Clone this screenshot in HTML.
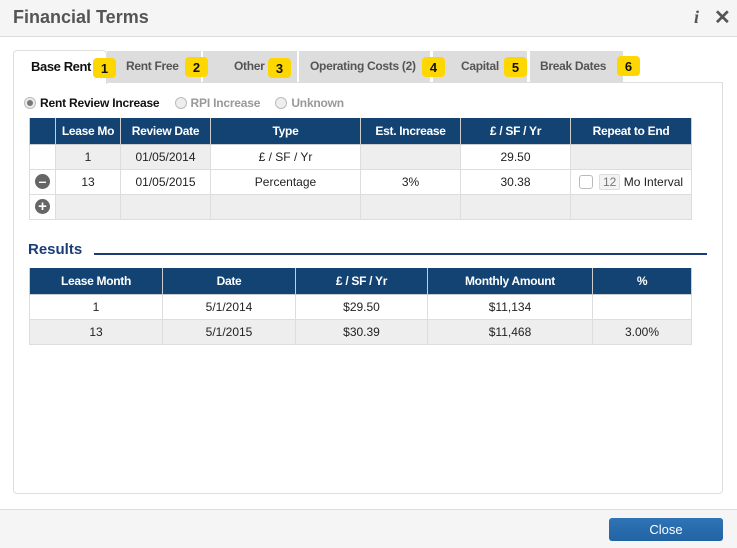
<!DOCTYPE html>
<html><head><style>
*{box-sizing:border-box;margin:0;padding:0}
body{width:737px;height:548px;position:relative;font-family:"Liberation Sans",Arial,sans-serif;font-size:12px;color:#222;background:#fff;overflow:hidden}
.a{position:absolute}
.hdr{left:0;top:0;width:737px;height:37px;background:#f5f5f5;border-bottom:1px solid #ddd}
.ftr{left:0;top:509px;width:737px;height:39px;background:#f5f5f5;border-top:1px solid #ddd}
.tab{top:51px;height:31px;background:#ddd;color:#555;font-size:12px;font-weight:bold;line-height:31px;letter-spacing:-0.3px;white-space:nowrap}
.badge{background:#ffd700;border-radius:4px;width:23px;height:20px;font-weight:bold;font-size:13px;line-height:21px;text-align:center;color:#111}
table{border-collapse:collapse;position:absolute;table-layout:fixed}
th{background:#134372;color:#fff;font-weight:bold;font-size:12px;height:26px;border:1px solid #ccc;border-top:none;letter-spacing:-0.3px}
td{border:1px solid #ddd;height:25px;text-align:center;font-size:12px}
tr.g td{background:#eee}
.rad{display:inline-block;width:12px;height:12px;border-radius:50%;border:1px solid #bbb;background:#eee;vertical-align:-2px;margin-right:4px}
</style></head><body>
<div class="a hdr"></div>
<div class="a" style="left:13px;top:7px;font-size:18px;font-weight:bold;color:#555">Financial Terms</div>
<div class="a" style="left:694px;top:7px;font-size:18px;font-weight:bold;font-style:italic;font-family:'Liberation Serif',serif;color:#555">i</div>
<div class="a" style="left:714px;top:5px;font-size:20px;font-weight:bold;color:#555">✕</div>

<div class="a" style="left:13px;top:82px;width:710px;height:412px;border:1px solid #ddd;border-radius:0 0 4px 4px"></div>
<div class="a" style="left:13px;top:50px;width:94px;height:34px;background:#fff;border:1px solid #ddd;border-bottom:none;border-radius:4px 4px 0 0;font-weight:bold;color:#111;font-size:13px;line-height:31px;padding-left:17px;letter-spacing:-0.4px">Base Rent</div>
<div class="a tab" style="left:107px;width:94px;padding-left:19px">Rent Free</div>
<div class="a tab" style="left:203px;width:94px;padding-left:31px">Other</div>
<div class="a tab" style="left:299px;width:131px;padding-left:11px">Operating Costs (2)</div>
<div class="a tab" style="left:433px;width:94px;padding-left:28px">Capital</div>
<div class="a tab" style="left:530px;width:93px;padding-left:10px">Break Dates</div>
<div class="a badge" style="left:93px;top:58px">1</div>
<div class="a badge" style="left:185px;top:57px">2</div>
<div class="a badge" style="left:268px;top:58px">3</div>
<div class="a badge" style="left:422px;top:57px">4</div>
<div class="a badge" style="left:504px;top:57px">5</div>
<div class="a badge" style="left:617px;top:56px">6</div>

<div class="a" style="left:24px;top:96px;font-size:12px;letter-spacing:-0.2px">
<span class="rad" style="background:radial-gradient(#777 2.5px,#eee 3.5px)"></span><b style="color:#111">Rent Review Increase</b>
<span class="rad" style="margin-left:12px"></span><b style="color:#999">RPI Increase</b>
<span class="rad" style="margin-left:12px"></span><b style="color:#999">Unknown</b></div>

<table style="left:29px;top:118px;width:662px">
<colgroup><col style="width:26px"><col style="width:65px"><col style="width:90px"><col style="width:150px"><col style="width:100px"><col style="width:110px"><col style="width:121px"></colgroup>
<tr><th></th><th>Lease Mo</th><th>Review Date</th><th>Type</th><th>Est. Increase</th><th>£ / SF / Yr</th><th>Repeat to End</th></tr>
<tr class="g"><td style="background:#fff"></td><td>1</td><td>01/05/2014</td><td style="background:#fff">£ / SF / Yr</td><td></td><td style="background:#fff">29.50</td><td></td></tr>
<tr><td><span style="display:inline-block;width:15px;height:15px;border-radius:50%;background:#666;color:#fff;line-height:14px;font-weight:bold;font-size:14px">–</span></td><td>13</td><td>01/05/2015</td><td>Percentage</td><td>3%</td><td>30.38</td><td style="text-align:left;padding-left:8px"><span style="display:inline-block;width:14px;height:14px;border:1px solid #bbb;border-radius:3px;vertical-align:-3px;margin-right:6px"></span><span style="display:inline-block;border:1px solid #ddd;background:#f3f3f3;color:#777;padding:0 3px;border-radius:2px">12</span> Mo Interval</td></tr>
<tr class="g"><td style="background:#fff"><span style="display:inline-block;width:15px;height:15px;border-radius:50%;background:#666;color:#fff;line-height:15px;font-weight:bold;font-size:15px">+</span></td><td></td><td></td><td></td><td></td><td></td><td></td></tr>
</table>

<div class="a" style="left:28px;top:241px;font-size:15px;font-weight:bold;color:#1a3d7a">Results</div>
<div class="a" style="left:94px;top:253px;width:613px;height:2px;background:#1a3d7a"></div>

<table style="left:29px;top:268px;width:662px">
<colgroup><col style="width:133px"><col style="width:133px"><col style="width:132px"><col style="width:165px"><col style="width:99px"></colgroup>
<tr><th>Lease Month</th><th>Date</th><th>£ / SF / Yr</th><th>Monthly Amount</th><th>%</th></tr>
<tr><td>1</td><td>5/1/2014</td><td>$29.50</td><td>$11,134</td><td></td></tr>
<tr class="g"><td>13</td><td>5/1/2015</td><td>$30.39</td><td>$11,468</td><td>3.00%</td></tr>
</table>

<div class="a ftr"></div>
<div class="a" style="left:609px;top:518px;width:114px;height:23px;background:linear-gradient(#2f74b5,#2263a3);border-radius:3px;color:#fff;text-align:center;line-height:23px;font-size:13px">Close</div>
</body></html>
